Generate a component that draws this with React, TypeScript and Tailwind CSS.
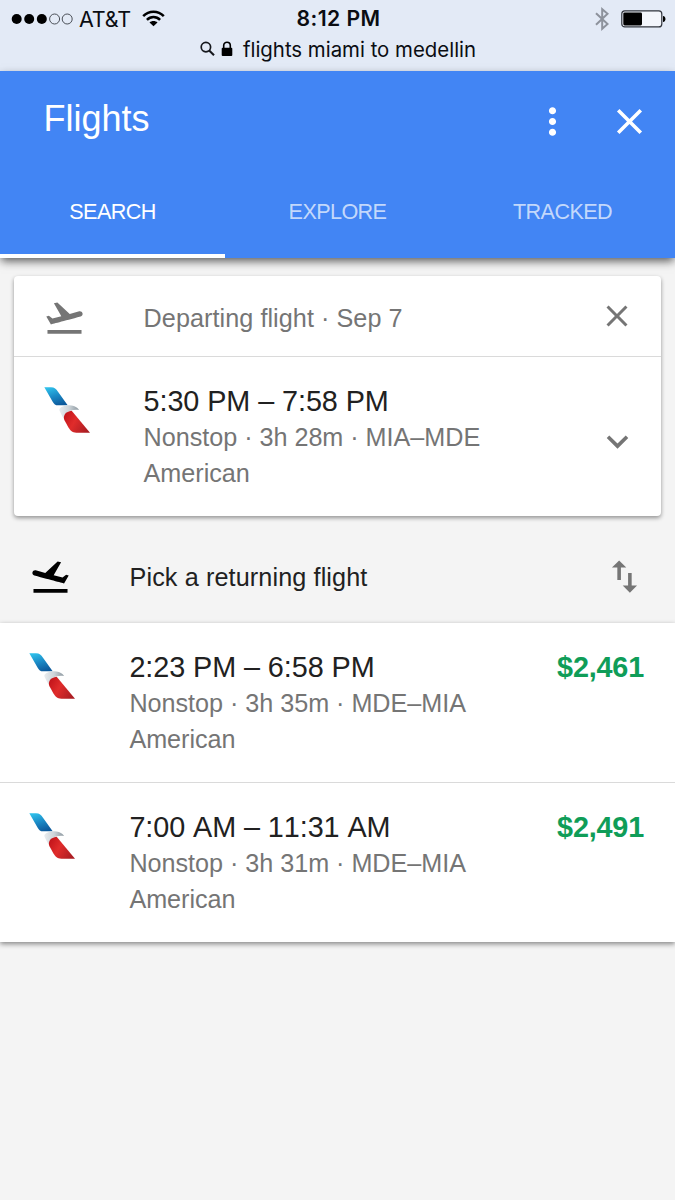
import React, { useId } from 'react';
import {
    MdClose,
    MdExpandMore,
    MdFlightTakeoff,
    MdMoreVert,
    MdSwapVert
} from 'react-icons/md';

interface Flight {
    times: string;
    details: string;
    airline: string;
    price?: string;
}

const departing: Flight = {
    times: '5:30 PM – 7:58 PM',
    details: 'Nonstop · 3h 28m · MIA–MDE',
    airline: 'American'
};

const returning: Flight[] = [
    {
        times: '2:23 PM – 6:58 PM',
        details: 'Nonstop · 3h 35m · MDE–MIA',
        airline: 'American',
        price: '$2,461'
    },
    {
        times: '7:00 AM – 11:31 AM',
        details: 'Nonstop · 3h 31m · MDE–MIA',
        airline: 'American',
        price: '$2,491'
    }
];

const AmericanLogo: React.FC = () => {
    const id = useId();
    return (
        <svg className="mt-[3.5px] h-[46px] w-[46px] shrink-0" viewBox="0 0 138 138">
            <defs>
                <linearGradient id={`${id}blue`} x1="0.2" y1="0" x2="0.6" y2="1">
                    <stop offset="0" stopColor="#2fc0ea" />
                    <stop offset="0.5" stopColor="#1b8ac6" />
                    <stop offset="1" stopColor="#0d5a9c" />
                </linearGradient>
                <linearGradient id={`${id}red`} x1="0" y1="0.3" x2="1" y2="0.8">
                    <stop offset="0" stopColor="#c4161c" />
                    <stop offset="0.4" stopColor="#e02c2b" />
                    <stop offset="1" stopColor="#a81c22" />
                </linearGradient>
                <linearGradient id={`${id}grey`} x1="0" y1="0.3" x2="1" y2="0.3">
                    <stop offset="0" stopColor="#e9edf0" />
                    <stop offset="0.5" stopColor="#ccd3d8" />
                    <stop offset="1" stopColor="#8b979f" />
                </linearGradient>
            </defs>
            <path d="M1 1H21C32 1 36 6 42 14L71 55H43C34 55 30 51 26 44Z" fill={`url(#${id}blue)`} />
            <path d="M71 55C86 55 99 59 105 69C92 67 80 70 72 74C63 79 59 87 59 94C53 86 49 77 46 70C45 62 56 58 71 55Z" fill={`url(#${id}grey)`} />
            <path d="M83 71L138 137H97C84 137 78 130 73 121L61 99C56 86 64 73 83 71Z" fill={`url(#${id}red)`} />
        </svg>
    );
};

const StatusBar: React.FC = () => (
    <div className="h-[71px] bg-[#e3eaf6] font-[Inter,sans-serif] text-[#0b0d12]">
        <div className="grid h-[37px] grid-cols-[1fr_auto_1fr] items-center pl-[11px] pr-[9px]">
            <div className="flex items-center">
                <svg className="h-3 w-[62px]" viewBox="0 0 62 12">
                    <circle cx="5.7" cy="6" r="5" fill="#000" />
                    <circle cx="18.2" cy="6" r="5" fill="#000" />
                    <circle cx="30.8" cy="6" r="5" fill="#000" />
                    <circle cx="43.6" cy="6" r="5" fill="none" stroke="#3a3e46" strokeWidth="0.9" />
                    <circle cx="56.2" cy="6" r="5" fill="none" stroke="#3a3e46" strokeWidth="0.9" />
                </svg>
                <span className="ml-[6px] pt-px text-[21.5px] tracking-[-0.2px]">AT&amp;T</span>
                <svg className="ml-[11px] h-[17px] w-[23px]" viewBox="0 0 23 17" fill="none" stroke="#000" strokeWidth="2.5">
                    <path d="M1.2 6.2C7 0.1 16 0.1 21.8 6.2" />
                    <path d="M4.9 9.9C8.7 6 14.3 6 18.1 9.9" />
                    <path d="M11.5 16.2L7.5 12.6C9.6 10.6 13.4 10.6 15.5 12.6Z" fill="#000" stroke="none" />
                </svg>
            </div>
            <span className="pt-px text-[21.2px] font-semibold tracking-[0.4px]">8:12 PM</span>
            <div className="flex items-center justify-end gap-3">
                <svg className="h-[24px] w-[14px]" viewBox="0 0 14 24" fill="none" stroke="#8d929c" strokeWidth="2">
                    <path d="M1 6.2L12.6 17L7.2 21.8V2.2L12.6 6.8L1 17.8" />
                </svg>
                <svg className="h-[18px] w-[45px]" viewBox="0 0 45 18">
                    <rect x="0.8" y="0.9" width="40" height="16" rx="3" fill="#f3f6fc" stroke="#30343c" strokeWidth="1.2" />
                    <rect x="2.3" y="2.4" width="18.7" height="13" rx="1.4" fill="#000" />
                    <path d="M42 6C45.3 6 45.3 12 42 12Z" fill="#000" />
                </svg>
            </div>
        </div>
        <div className="flex h-6 items-center justify-center">
            <svg className="h-4 w-4" viewBox="0 0 16 16" fill="none" stroke="#16181d" strokeWidth="1.7">
                <circle cx="6.9" cy="6.1" r="4.7" />
                <path d="M10.2 9.4L15 14.2" strokeWidth="2.1" />
            </svg>
            <svg className="ml-[6px] h-4 w-3" viewBox="0 0 12 16">
                <path d="M2.7 8V4.6C2.7 0.2 9.3 0.2 9.3 4.6V8" fill="none" stroke="#000" strokeWidth="1.6" />
                <rect x="0.7" y="6.8" width="10.6" height="8.2" rx="1" fill="#000" />
            </svg>
            <span className="ml-[10px] pt-[2px] text-[20.4px]">flights miami to medellin</span>
        </div>
    </div>
);

const Header: React.FC = () => (
    <header className="relative h-[187px] bg-[#4285f4] text-white shadow-[0_4px_9px_-1px_rgba(0,0,0,0.65)]">
        <div className="flex h-[101px] items-center pl-[43.5px] pr-[24px]">
            <h1 className="mb-[6px] flex-1 text-[36px]">Flights</h1>
            <MdMoreVert className="mr-[34px] h-[43px] w-[43px]" />
            <MdClose className="h-[43px] w-[43px]" />
        </div>
        <nav className="grid h-[86px] grid-cols-3 text-center text-[21.6px] leading-[80px] tracking-[-0.6px]">
            <span className="h-[86px] border-b-4 border-white">SEARCH</span>
            <span className="text-white/70">EXPLORE</span>
            <span className="text-white/70">TRACKED</span>
        </nav>
    </header>
);

const FlightInfo: React.FC<{ flight: Flight }> = ({ flight }) => (
    <div className="flex-1 text-[25.2px] leading-9 tracking-[-0.03px] text-[#757575]">
        <div className="text-[28.8px] tracking-[-0.08px] text-[#212121] [font-kerning:none]">{flight.times}</div>
        <div>{flight.details}</div>
        <div>{flight.airline}</div>
    </div>
);

const App: React.FC = () => {
    return (
        <div className="h-[1200px] w-[675px] overflow-hidden bg-[#f4f4f4] font-['Liberation_Sans',Arial,sans-serif]">
            <StatusBar />
            <Header />

            <section className="mx-[14.4px] mt-[18px] h-[240px] rounded-[4px] bg-white shadow-[0_2px_4px_rgba(0,0,0,0.4)]">
                <div className="flex h-[81px] items-center border-b border-[#dadada] pl-[29px] pr-[26px]">
                    <MdFlightTakeoff className="mt-[3px] h-[43px] w-[43px] text-[#757575]" />
                    <span className="ml-[57.2px] flex-1 pt-[5px] text-[25.2px] tracking-[0.06px] text-[#757575]">Departing flight · Sep 7</span>
                    <MdClose className="h-9 w-9 text-[#757575]" />
                </div>
                <div className="flex pl-[29.6px] pr-[22px] pt-[26px]">
                    <AmericanLogo />
                    <div className="w-[53.6px]" />
                    <FlightInfo flight={departing} />
                    <MdExpandMore className="mt-[37px] h-[43px] w-[43px] text-[#757575]" />
                </div>
            </section>

            <div className="flex h-[107px] items-center pl-[29px] pr-[29px] pt-[15px]">
                {/* mirrored takeoff plane marks the return leg */}
                <MdFlightTakeoff className="-mt-px h-[43px] w-[43px] -scale-x-100 text-black" />
                <span className="ml-[57.5px] flex-1 pt-px text-[25.2px] tracking-[0.12px] text-[#212121]">Pick a returning flight</span>
                <MdSwapVert className="-mt-px h-[43px] w-[43px] text-[#757575]" />
            </div>

            <section className="bg-white shadow-[0_2px_5px_rgba(0,0,0,0.45)]">
                {returning.map((flight, index) => (
                    <div
                        key={index}
                        className="flex h-[160px] border-b border-[#dadada] pl-[29.4px] pr-[31px] pt-[26px] last:h-[159px] last:border-b-0"
                    >
                        <AmericanLogo />
                        <div className="w-[54px]" />
                        <FlightInfo flight={flight} />
                        <div className="text-[28.8px] font-bold leading-9 tracking-[-0.2px] text-[#0f9d58]">{flight.price}</div>
                    </div>
                ))}
            </section>
        </div>
    );
};

export default App;
